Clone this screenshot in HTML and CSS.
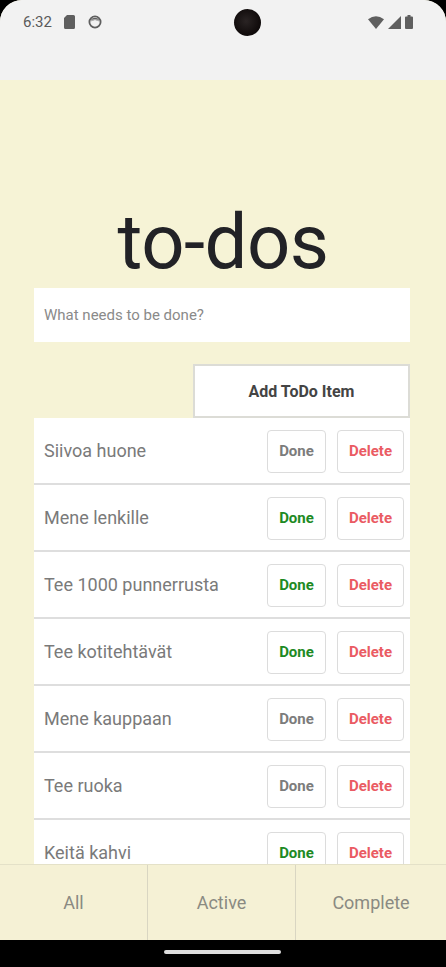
FILE: index.html
```html
<!DOCTYPE html>
<html lang="fi">
<head>
<meta charset="utf-8">
<title>to-dos</title>
<link rel="stylesheet" href="styles.css">
</head>
<body>
<div class="phone">
  <div class="statusbar">
    <div class="sb-left">
      <span class="time">6:32</span>
      <svg class="sb-icon" width="11" height="14" viewBox="0 0 11 14"><path d="M3 0h6.5a1.5 1.5 0 0 1 1.5 1.5v11a1.5 1.5 0 0 1-1.5 1.5h-8A1.5 1.5 0 0 1 0 12.5V3z" fill="#5f5f5f"/></svg>
      <svg class="sb-icon" width="14" height="14" viewBox="0 0 14 14"><circle cx="7" cy="7" r="5.6" fill="none" stroke="#5f5f5f" stroke-width="1.8"/><path d="M2.5 6.5C3.5 3.5 10.5 3.5 11.5 6.5L11 5C9.5 2 4.5 2 3 5z" fill="#5f5f5f"/><path d="M2.6 6.6C4 4.2 10 4.2 11.4 6.6Q7 3.4 2.6 6.6z" fill="#5f5f5f"/></svg>
    </div>
    <div class="camera"></div>
    <div class="sb-right">
      <svg width="16" height="13" viewBox="0 0 16 13"><path d="M0 3.2Q8 -2.8 16 3.2L8 13z" fill="#5f5f5f"/></svg>
      <svg width="13" height="13" viewBox="0 0 13 13"><path d="M13 0V13H0z" fill="#5f5f5f"/></svg>
      <svg width="8" height="14" viewBox="0 0 8 14"><path d="M2.5 0h3v1.5H7a1 1 0 0 1 1 1V13a1 1 0 0 1-1 1H1a1 1 0 0 1-1-1V2.5a1 1 0 0 1 1-1h1.5z" fill="#5f5f5f"/></svg>
    </div>
  </div>

  <div class="app">
    <h1 class="title">to-dos</h1>
    <div class="new-todo">What needs to be done?</div>
    <button class="add-btn">Add ToDo Item</button>
    <ul class="list">
      <li class="item"><span class="item-text">Siivoa huone</span><button class="btn done is-complete">Done</button><button class="btn delete">Delete</button></li>
      <li class="item"><span class="item-text">Mene lenkille</span><button class="btn done">Done</button><button class="btn delete">Delete</button></li>
      <li class="item"><span class="item-text">Tee 1000 punnerrusta</span><button class="btn done">Done</button><button class="btn delete">Delete</button></li>
      <li class="item"><span class="item-text">Tee kotitehtävät</span><button class="btn done">Done</button><button class="btn delete">Delete</button></li>
      <li class="item"><span class="item-text">Mene kauppaan</span><button class="btn done is-complete">Done</button><button class="btn delete">Delete</button></li>
      <li class="item"><span class="item-text">Tee ruoka</span><button class="btn done is-complete">Done</button><button class="btn delete">Delete</button></li>
      <li class="item"><span class="item-text">Keitä kahvi</span><button class="btn done">Done</button><button class="btn delete">Delete</button></li>
    </ul>
  </div>

  <div class="tabs">
    <div class="tab">All</div>
    <div class="tab">Active</div>
    <div class="tab">Complete</div>
  </div>

  <div class="navbar"><div class="pill"></div></div>
</div>
</body>
</html>
```

FILE: styles.css
```css
* { box-sizing: border-box; }
html, body {
  margin: 0;
  padding: 0;
  background: #000;
}
body {
  font-family: Roboto, "Noto Sans", "Liberation Sans", sans-serif;
  width: 446px;
  height: 967px;
  overflow: hidden;
}
.phone {
  width: 446px;
  height: 967px;
  display: flex;
  flex-direction: column;
  border-radius: 22px 22px 0 0;
  overflow: hidden;
  background: #f6f3d6;
}
.statusbar {
  height: 80px;
  flex: none;
  background: #f2f2f2;
  display: flex;
  align-items: flex-start;
  justify-content: space-between;
  padding: 14px 33px 0 23px;
}
.sb-left {
  display: flex;
  align-items: center;
  gap: 0;
  height: 16px;
}
.time {
  font-size: 15px;
  color: #5a5a5a;
  margin-right: 12px;
}
.sb-icon { margin-right: 13px; }
.camera {
  width: 27px;
  height: 27px;
  border-radius: 50%;
  background: radial-gradient(circle at 45% 45%, #2a2424 0, #120d0d 60%, #050303 100%);
  margin-top: -5px;
  margin-left: 12px;
}
.sb-right {
  display: flex;
  align-items: center;
  gap: 4px;
  height: 16px;
}
.app {
  height: 784px;
  flex: none;
  overflow: hidden;
  background: #f6f3d6;
  display: flex;
  flex-direction: column;
  padding-top: 124px;
}
.title {
  margin: 0 0 8px;
  text-align: center;
  font-weight: 400;
  font-size: 76px;
  line-height: 76px;
  color: #222226;
  letter-spacing: -0.5px;
}
.new-todo {
  margin: 0 36px 0 34px;
  height: 54px;
  background: #fff;
  color: #8a8a8a;
  font-size: 15px;
  display: flex;
  align-items: center;
  padding-left: 10px;
  flex: none;
}
.add-btn {
  align-self: flex-end;
  margin: 22px 36px 0 0;
  width: 217px;
  height: 54px;
  flex: none;
  background: #fff;
  border: 2px solid #dcdcd6;
  font-family: inherit;
  font-weight: 700;
  font-size: 16px;
  color: #444;
  padding: 0;
}
.list {
  list-style: none;
  margin: 0 36px 0 34px;
  padding: 0;
  flex: none;
}
.item {
  height: 67px;
  background: #fff;
  border-bottom: 2px solid #dedede;
  display: flex;
  align-items: center;
  padding: 0 6px 0 10px;
}
.item-text {
  flex: 1;
  font-size: 18px;
  color: #7a7a7a;
}
.btn {
  height: 43px;
  background: #fff;
  border: 1.5px solid #dcdcdc;
  border-radius: 4px;
  font-family: inherit;
  font-weight: 700;
  font-size: 15px;
  padding: 0;
  margin-top: 1px;
}
.done {
  width: 59px;
  color: #1e8a24;
  margin-right: 11px;
}
.done.is-complete { color: #7c7c7c; }
.delete {
  width: 67px;
  color: #ea5b63;
}
.tabs {
  height: 76px;
  flex: none;
  display: grid;
  grid-template-columns: 148px 148px 150px;
  background: #f5f1d5;
  border-top: 1px solid #e4e1c8;
}
.tab {
  display: flex;
  align-items: center;
  justify-content: center;
  font-size: 18px;
  color: #8a8a82;
  border-right: 1.5px solid #d9d6c2;
}
.tab:last-child { border-right: none; }
.navbar {
  height: 27px;
  flex: none;
  background: #000;
  display: flex;
  justify-content: center;
  padding-top: 10px;
}
.pill {
  width: 117px;
  height: 4px;
  border-radius: 2px;
  background: #dedede;
  margin-left: -2px;
}
```
